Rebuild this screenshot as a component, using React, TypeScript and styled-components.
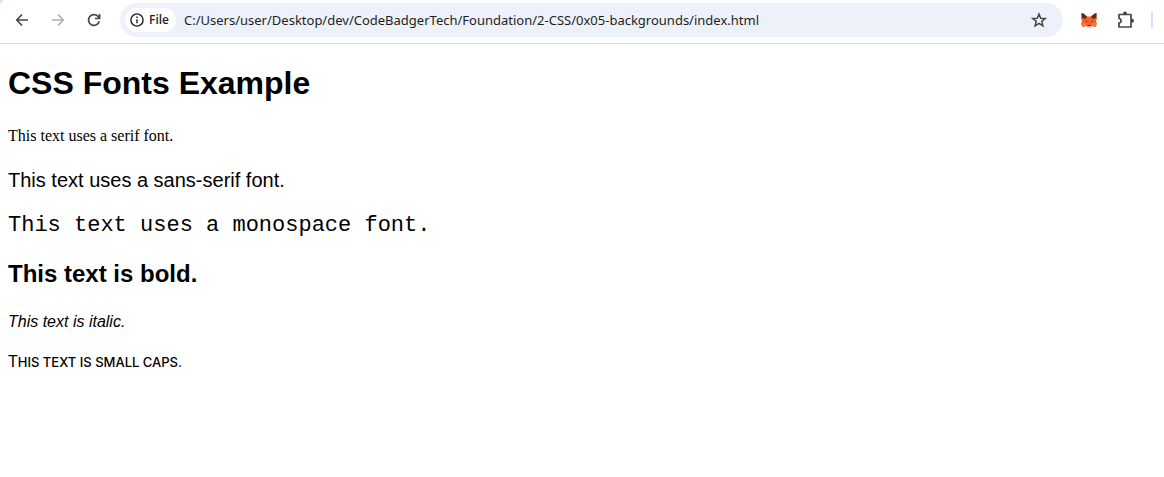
import React from 'react';
import styled, { createGlobalStyle } from 'styled-components';

const GlobalStyle = createGlobalStyle`
  body {
    margin: 0;
    background: #fff;
    color: #000;
    font-family: "Liberation Sans", Arial, sans-serif;
  }
`;

const Toolbar = styled.header`
  display: flex;
  align-items: center;
  box-sizing: border-box;
  height: 44px;
  padding: 0 11px 4px 12px;
  border-bottom: 1px solid #dcdddd;
  background: linear-gradient(135deg, #d3e3fd 2px, #fff 3px);
`;

const ToolButton = styled.button<{ $gap?: number }>`
  display: flex;
  flex: none;
  align-items: center;
  justify-content: center;
  width: 20px;
  height: 20px;
  margin: 0 ${({ $gap = 0 }) => $gap}px 0 0;
  padding: 0;
  border: 0;
  background: transparent;
  color: #474747;

  &:disabled {
    color: #b0b0b0;
  }
`;

const AddressBar = styled.div`
  display: flex;
  flex: 1;
  align-items: center;
  box-sizing: border-box;
  min-width: 0;
  height: 34px;
  margin-right: 16px;
  padding: 0 14px 0 5px;
  border-radius: 17px;
  background: #ecf1fa;
`;

const SiteChip = styled.button`
  display: flex;
  flex: none;
  align-items: center;
  gap: 4px;
  height: 24px;
  padding: 0 7px 0 4px;
  border: 0;
  border-radius: 12px;
  background: #fff;
  color: #1f1f1f;
  font: 600 12px/24px "Open Sans", sans-serif;
`;

const AddressInput = styled.input`
  flex: 1;
  min-width: 0;
  height: 24px;
  padding: 0 8px;
  border: 0;
  outline: 0;
  background: transparent;
  color: #1f1f1f;
  font: 13px/24px "Noto Sans", sans-serif;
`;

const Divider = styled.span`
  flex: none;
  width: 2px;
  height: 16px;
  background: #d3e3fd;
`;

const Page = styled.main`
  padding: 21px 8px 24px;
`;

const Heading = styled.h1`
  margin: 0 0 25px;
  font-size: 32px;
  line-height: 37px;
`;

const Sample = styled.p`
  margin: 0 0 24px;
  font-size: 16px;
  line-height: 18px;
`;

const SerifSample = styled(Sample)`
  font-family: "Liberation Serif", "Times New Roman", serif;
`;

const SansSample = styled(Sample)`
  margin-bottom: 21px;
  font-size: 20px;
  line-height: 23px;
`;

const MonoSample = styled(Sample)`
  margin-bottom: 22px;
  font-family: "Liberation Mono", "Courier New", monospace;
  font-size: 22px;
  line-height: 25px;
`;

const BoldSample = styled(Sample)`
  margin-bottom: 26px;
  font-size: 24px;
  font-weight: bold;
  line-height: 27px;
`;

const ItalicSample = styled(Sample)`
  margin-bottom: 22px;
  font-style: italic;
`;

const SmallCapsSample = styled(Sample)`
  font-family: Inter, sans-serif;
  font-size: 13px;
  font-weight: 500;
  text-transform: uppercase;

  &::first-letter {
    font-family: "Liberation Sans", Arial, sans-serif;
    font-size: 16px;
    font-weight: 400;
  }
`;

const stroke = { fill: 'none', stroke: 'currentColor', strokeWidth: 1.7 };

const BackIcon = () => (
  <svg width="20" height="20" viewBox="0 0 20 20" {...stroke}>
    <path d="M16 10H5M10 4.5 4.8 10l5.2 5.5" />
  </svg>
);

const ForwardIcon = () => (
  <svg width="20" height="20" viewBox="0 0 20 20" {...stroke}>
    <path d="M4 10h11M10 4.5l5.2 5.5-5.2 5.5" />
  </svg>
);

const ReloadIcon = () => (
  <svg width="20" height="20" viewBox="0 0 20 20" {...stroke}>
    <path d="M15.2 11.2A5.4 5.4 0 1 1 13.8 6.2L15.6 8M15.6 4v4.5H11" />
  </svg>
);

const InfoIcon = () => (
  <svg width="16" height="16" viewBox="0 0 16 16" fill="none" stroke="currentColor" strokeWidth="1.4">
    <circle cx="8" cy="8" r="6.1" />
    <path d="M8 7.2v4M8 4.6v1.5" />
  </svg>
);

const StarIcon = () => (
  <svg width="20" height="20" viewBox="0 0 20 20" fill="none" stroke="currentColor" strokeWidth="1.5">
    <path d="m10 4 1.7 4.2 4.6.3-3.5 2.9 1.1 4.5-3.9-2.5-3.9 2.5 1.1-4.5-3.5-2.9 4.6-.3z" />
  </svg>
);

const FoxIcon = () => (
  <svg width="18" height="18" viewBox="0 0 18 18">
    <path d="M1.5 2 7 5.5h4L16.5 2l.5 5-1 3 1 3-1.5 3-3.5-1-1.5 1.5H8L6.5 15l-4 1L1 13l1-3-1-3z" fill="#f5622b" />
    <path d="M1.5 2l2 .5L7 5.5 5.5 8 2 7zM16.5 2l-2 .5L11 5.5 12.5 8 16 7z" fill="#5d2a22" />
    <path d="m2 12.5 3-.5 1.500 3L3 16zM16 12.500l-3-.5-1.500 3 3.500 1z" fill="#ff7a42" />
    <path d="m5.500 9.500 2 1.200-1.800.3zM12.500 9.500l-2 1.200 1.800.3zM7.500 14h3v1.200h-3z" fill="#4a3035" />
    <path d="M7 15.200h4v1.600H7z" fill="#d5cbc6" />
  </svg>
);

const PuzzleIcon = () => (
  <svg width="20" height="20" viewBox="0 0 20 20" {...stroke}>
    <path d="M4 4.5h12v12.500H4v-4c2.800-.4 2.800-4.100 0-4.500z" strokeLinejoin="round" />
    <path d="M8 4.500V3.500a2 2 0 0 1 4 0v1zM16 8.700h1a2 2 0 0 1 0 4h-1z" fill="currentColor" stroke="none" />
  </svg>
);

export default function App() {
  return (
    <>
      <GlobalStyle />
      <Toolbar>
        <ToolButton aria-label="Back" $gap={16}><BackIcon /></ToolButton>
        <ToolButton aria-label="Forward" disabled $gap={16}><ForwardIcon /></ToolButton>
        <ToolButton aria-label="Reload" $gap={16}><ReloadIcon /></ToolButton>
        <AddressBar>
          <SiteChip><InfoIcon />File</SiteChip>
          <AddressInput
            aria-label="Address"
            defaultValue="C:/Users/user/Desktop/dev/CodeBadgerTech/Foundation/2-CSS/0x05-backgrounds/index.html"
          />
          <ToolButton aria-label="Bookmark this page"><StarIcon /></ToolButton>
        </AddressBar>
        <ToolButton aria-label="Wallet" $gap={16}><FoxIcon /></ToolButton>
        <ToolButton aria-label="Extensions" $gap={16}><PuzzleIcon /></ToolButton>
        <Divider />
      </Toolbar>
      <Page>
        <Heading>CSS Fonts Example</Heading>
        <SerifSample>This text uses a serif font.</SerifSample>
        <SansSample>This text uses a sans-serif font.</SansSample>
        <MonoSample>This text uses a monospace font.</MonoSample>
        <BoldSample>This text is bold.</BoldSample>
        <ItalicSample>This text is italic.</ItalicSample>
        <SmallCapsSample>This text is small caps.</SmallCapsSample>
      </Page>
    </>
  );
}
